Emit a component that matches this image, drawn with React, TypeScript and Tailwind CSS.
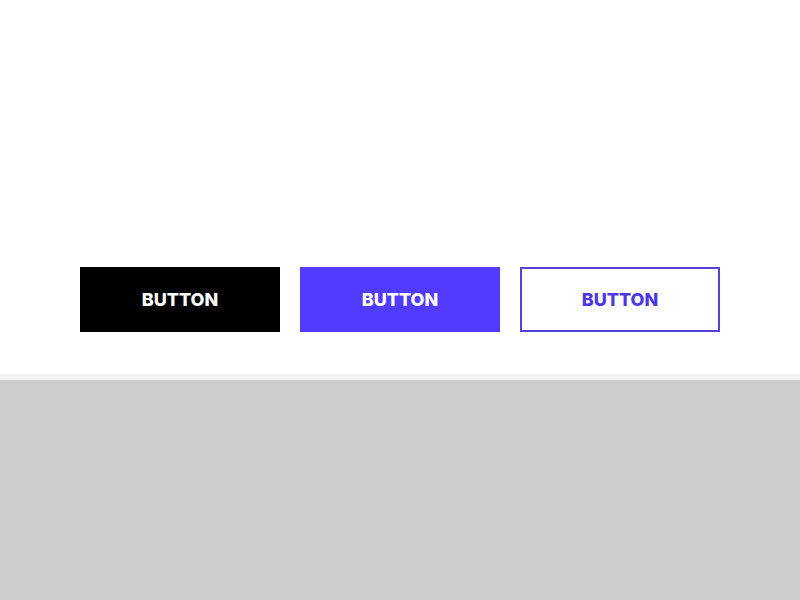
export default function App() {
  return (
    <div className="w-[800px] h-[600px] flex flex-col bg-white font-['Inter',sans-serif]">
      <section className="h-[374px] pt-[267px] bg-white">
        <div className="flex justify-center gap-5">
          <button className="w-[200px] h-[65px] bg-black text-white text-[18px] font-extrabold">
            BUTTON
          </button>
          <button className="w-[200px] h-[65px] bg-[#513bff] text-white text-[18px] font-extrabold">
            BUTTON
          </button>
          <button className="w-[200px] h-[65px] border-2 border-[#5340d8] bg-white text-[#4b38e0] text-[18px] font-extrabold">
            BUTTON
          </button>
        </div>
      </section>
      <div className="h-[6px] bg-[#f2f2f2]" />
      <div className="flex-1 bg-[#cccccc]" />
    </div>
  )
}
